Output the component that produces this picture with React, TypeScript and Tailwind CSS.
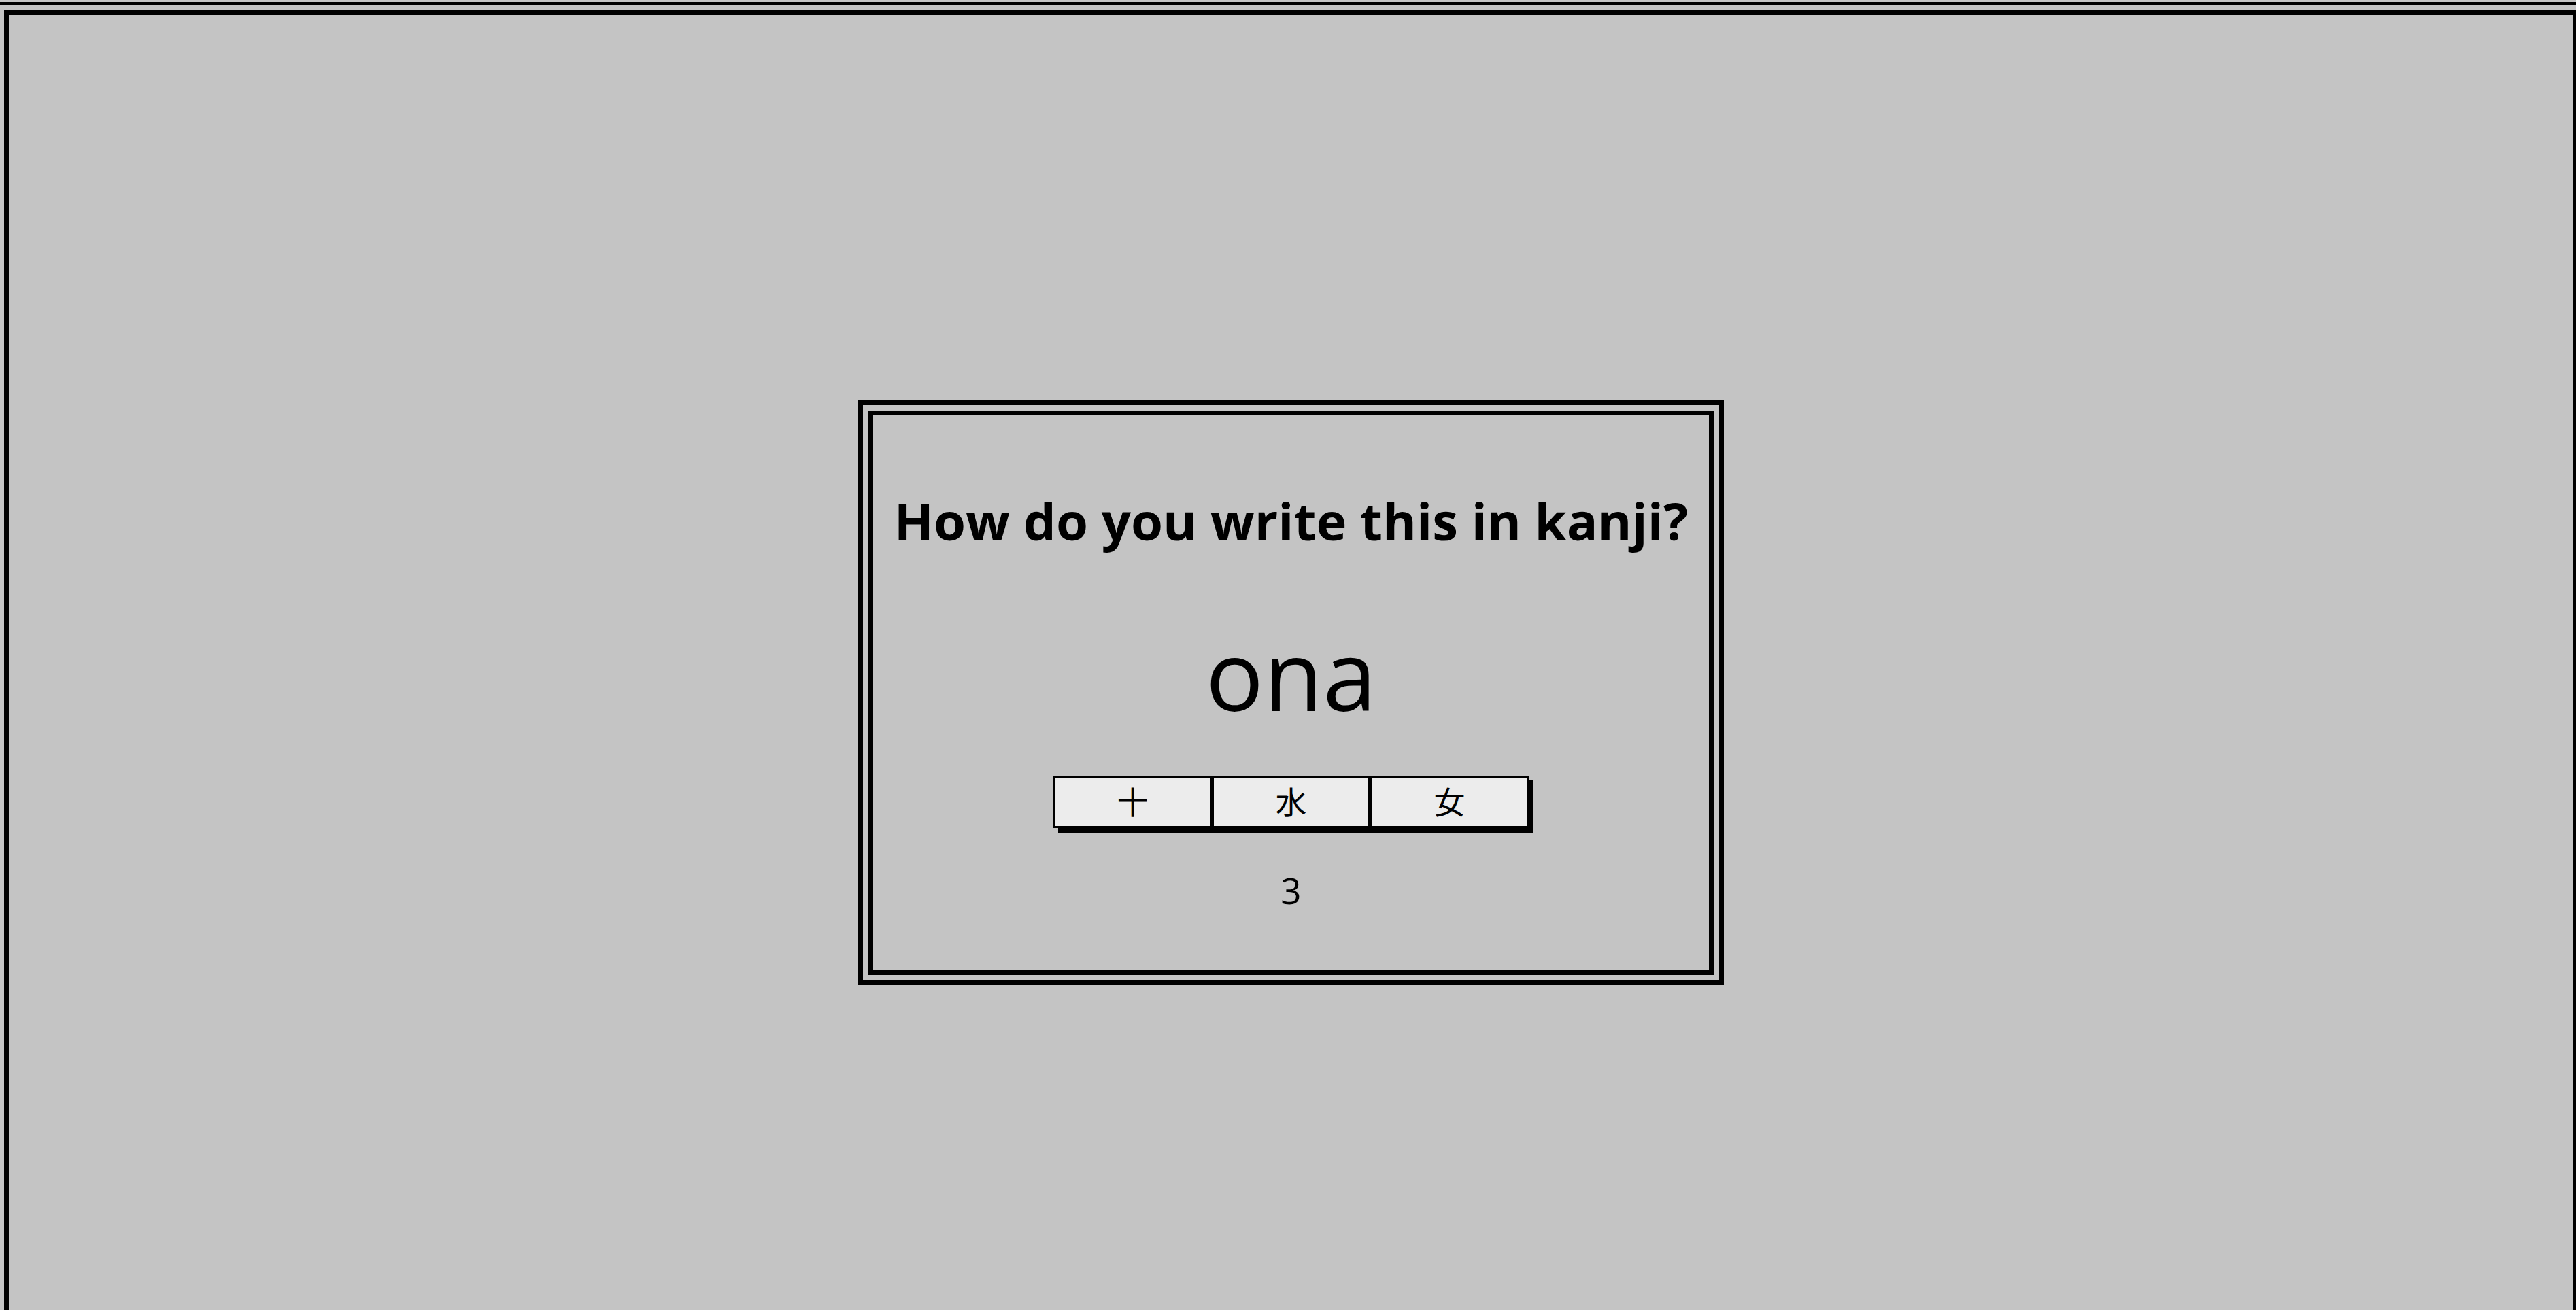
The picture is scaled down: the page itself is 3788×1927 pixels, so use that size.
const choices = ['十', '水', '女'];

const App = () => {
  return (
    <div className="h-screen overflow-hidden bg-[#c4c4c4] pt-[3px] text-black" style={{ fontFamily: '"Open Sans", "Noto Sans", sans-serif' }}>
      {/* top rule */}
      <div className="h-[4px] bg-black"></div>

      {/* main frame */}
      <div className="ml-[6px] mt-[8px] flex h-[2008px] w-[3785px] items-center justify-center border-[7px] border-black">
        <div className="flex w-[1273px] flex-col items-center border-[22px] border-double border-black pb-[91px] pt-[117px]">
          <h1 className="text-[76px] font-bold leading-none">How do you write this in kanji?</h1>

          <div className="mt-[116px] text-[142px] font-normal leading-none">ona</div>

          <div className="mt-[79px] flex">
            {choices.map((kanji, i) => (
              <button
                key={i}
                className="flex h-[77px] w-[233px] items-center justify-center border-[3px] border-black bg-[#ececec] pb-[6px] text-[46px] leading-none shadow-[7px_7px_0_#000]"
                style={{ fontFamily: '"Noto Sans CJK JP", sans-serif' }}
              >
                {kanji}
              </button>
            ))}
          </div>

          <div className="mt-[65px] text-[53px] font-normal leading-none">3</div>
        </div>
      </div>
    </div>
  );
};

export default App;
